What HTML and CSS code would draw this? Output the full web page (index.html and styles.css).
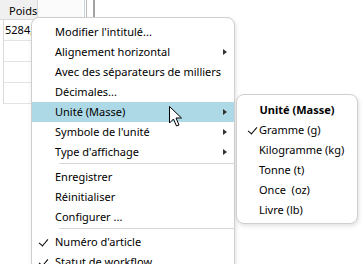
FILE: index.html
```html
<!DOCTYPE html>
<html lang="fr">
<head>
    <meta charset="UTF-8">
    <title>Menu contextuel</title>
    <link rel="stylesheet" href="styles.css">
</head>
<body>
    <div class="sheet">
        <div class="grid">
            <div class="head">
                <div class="hcell">Poids</div>
                <div class="hcell blank"></div>
            </div>
            <div class="row">5284,3</div>
            <div class="row"></div>
            <div class="row"></div>
            <div class="row"></div>
        </div>
        <div class="splitter"></div>
    </div>

    <div class="menu main-menu">
        <div class="item">Modifier l'intitulé...</div>
        <div class="item has-sub">Alignement horizontal</div>
        <div class="item">Avec des séparateurs de milliers</div>
        <div class="item">Décimales...</div>
        <div class="item has-sub active">Unité (Masse)</div>
        <div class="item has-sub">Symbole de l'unité</div>
        <div class="item has-sub">Type d'affichage</div>
        <div class="sep"></div>
        <div class="item">Enregistrer</div>
        <div class="item">Réinitialiser</div>
        <div class="item">Configurer ...</div>
        <div class="sep"></div>
        <div class="item checked">Numéro d'article</div>
        <div class="item checked">Statut de workflow</div>
    </div>

    <div class="menu sub-menu">
        <div class="title">Unité (Masse)</div>
        <div class="item checked">Gramme (g)</div>
        <div class="item">Kilogramme (kg)</div>
        <div class="item">Tonne (t)</div>
        <div class="item">Once&nbsp; (oz)</div>
        <div class="item">Livre (lb)</div>
    </div>

    <svg class="cursor" width="14" height="22" viewBox="0 0 14 22">
        <path d="M0.5 0.5 L0.5 17 L4.5 13 L7.5 20 L10 19 L7 12 L12.5 12 Z" fill="#fff" stroke="#000" stroke-width="1" stroke-linejoin="round"/>
    </svg>
</body>
</html>
```

FILE: styles.css
```css
body {
    margin: 0;
    width: 363px;
    height: 264px;
    overflow: hidden;
    background-color: #fff;
    font-family: "Noto Sans", "Open Sans", sans-serif;
    font-size: 11px;
    color: #000;
}

.sheet {
    display: flex;
    align-items: flex-start;
}

.grid {
    width: 82px;
}

.head {
    display: flex;
    height: 19px;
    border-bottom: 1px solid #d9d9d9;
    background-color: #f0f0f0;
}

.hcell {
    width: 28px;
    padding: 3px 0 0 9px;
    line-height: 15px;
    border-right: 1px solid #d9d9d9;
}

.hcell.blank {
    flex: 1;
    border-right: none;
    background-color: #fbfbfb;
}

.row {
    height: 20px;
    line-height: 20px;
    margin-left: 3px;
    padding-left: 1px;
    border-left: 1px solid #d9d9d9;
    border-bottom: 1px solid #e3e3e3;
    white-space: nowrap;
    overflow: hidden;
}

.splitter {
    width: 8px;
    height: 40px;
    margin-left: 2px;
    border-left: 1px solid #c7d3e3;
    border-right: 2px solid #a3a3a3;
    box-shadow: inset 1px 0 0 #fff, inset 2px 0 0 #b8b8b8;
}

.menu {
    position: absolute;
    box-sizing: border-box;
    background-color: #fff;
    border: 1px solid #cfcfcf;
    border-radius: 8px;
    box-shadow: 1px 2px 4px rgba(0, 0, 0, 0.12);
}

.main-menu {
    left: 31px;
    top: 17px;
    width: 204px;
    height: 280px;
    padding-top: 4px;
}

.sub-menu {
    left: 236px;
    top: 94px;
    width: 122px;
    padding: 5px 0 3px;
}

.item {
    position: relative;
    height: 20px;
    line-height: 20px;
    padding-left: 23px;
    white-space: nowrap;
}

.sub-menu .item {
    padding-left: 22px;
}

.item.active {
    background-color: #add8e6;
}

.item.has-sub::after {
    content: "";
    position: absolute;
    right: 7px;
    top: 7px;
    border-top: 3px solid transparent;
    border-bottom: 3px solid transparent;
    border-left: 4px solid #333;
}

.item.checked::before {
    content: "";
    position: absolute;
    left: 9px;
    top: 5px;
    width: 4px;
    height: 8px;
    border-right: 1.5px solid #000;
    border-bottom: 1.5px solid #000;
    transform: rotate(40deg);
}

.sub-menu .item.checked::before {
    left: 13px;
}

.title {
    height: 20px;
    line-height: 20px;
    text-align: center;
    font-weight: bold;
}

.sep {
    height: 0;
    margin: 1px 0 3px 27px;
    border-top: 1px solid #d7d7d7;
}

.cursor {
    position: absolute;
    left: 169px;
    top: 106px;
}
```
